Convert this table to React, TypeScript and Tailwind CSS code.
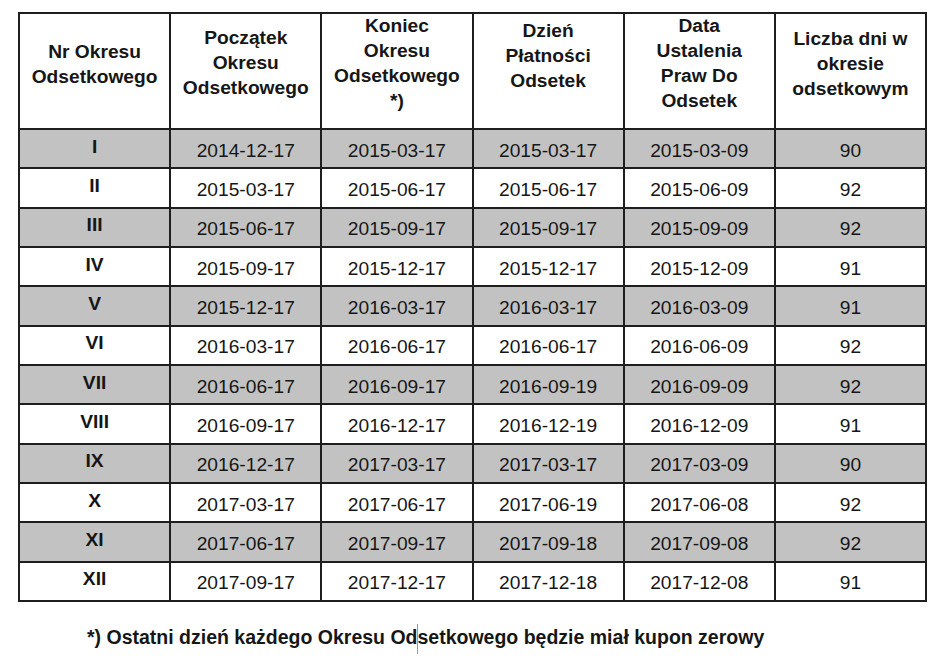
const headers: { lines: string[]; pad: string }[] = [
  { lines: ["Nr Okresu", "Odsetkowego"], pad: "pb-[15px]" },
  { lines: ["Początek", "Okresu", "Odsetkowego"], pad: "pb-[17px]" },
  { lines: ["Koniec", "Okresu", "Odsetkowego", "*)"], pad: "pb-[17px]" },
  { lines: ["Dzień", "Płatności", "Odsetek"], pad: "pb-[31px]" },
  { lines: ["Data", "Ustalenia", "Praw Do", "Odsetek"], pad: "pb-[17px]" },
  { lines: ["Liczba dni w", "okresie", "odsetkowym"], pad: "pb-[16px]" },
]

const rows: string[][] = [
  ["I", "2014-12-17", "2015-03-17", "2015-03-17", "2015-03-09", "90"],
  ["II", "2015-03-17", "2015-06-17", "2015-06-17", "2015-06-09", "92"],
  ["III", "2015-06-17", "2015-09-17", "2015-09-17", "2015-09-09", "92"],
  ["IV", "2015-09-17", "2015-12-17", "2015-12-17", "2015-12-09", "91"],
  ["V", "2015-12-17", "2016-03-17", "2016-03-17", "2016-03-09", "91"],
  ["VI", "2016-03-17", "2016-06-17", "2016-06-17", "2016-06-09", "92"],
  ["VII", "2016-06-17", "2016-09-17", "2016-09-19", "2016-09-09", "92"],
  ["VIII", "2016-09-17", "2016-12-17", "2016-12-19", "2016-12-09", "91"],
  ["IX", "2016-12-17", "2017-03-17", "2017-03-17", "2017-03-09", "90"],
  ["X", "2017-03-17", "2017-06-17", "2017-06-19", "2017-06-08", "92"],
  ["XI", "2017-06-17", "2017-09-17", "2017-09-18", "2017-09-08", "92"],
  ["XII", "2017-09-17", "2017-12-17", "2017-12-18", "2017-12-08", "91"],
]

export default function App() {
  return (
    <div
      className="w-[945px] h-[660px] bg-white text-[#161616] pt-[12px] pl-[18px]"
      style={{ fontFamily: '"Liberation Sans", Arial, sans-serif' }}
    >
      <div className="w-[909px] grid grid-cols-6 gap-[2px] p-[2px] bg-[#1e1e1e] text-[19.2px]">
        {headers.map((h, i) => (
          <div
            key={i}
            className={`h-[114px] bg-white flex flex-col items-center justify-center font-bold leading-[25px] text-center ${h.pad}`}
          >
            {h.lines.map((l, j) => (
              <span key={j}>{l}</span>
            ))}
          </div>
        ))}
        {rows.map((r, i) =>
          r.map((c, j) => (
            <div
              key={`${i}-${j}`}
              className={`h-[37.33px] flex items-center justify-center leading-none ${
                i % 2 === 0 ? "bg-[#c2c2c2]" : "bg-white"
              } ${j === 0 ? "font-bold pb-[5px]" : "pt-[3px]"}`}
            >
              {c}
            </div>
          ))
        )}
      </div>
      <div className="mt-[22px] pl-[69px] font-bold text-[19.5px] leading-[24px] whitespace-nowrap">
        *) Ostatni dzień każdego Okresu Od
        <span className="inline-block w-px h-[30px] bg-[#9a9a9a] align-middle -mx-[0.5px]" />
        setkowego będzie miał kupon zerowy
      </div>
    </div>
  )
}
